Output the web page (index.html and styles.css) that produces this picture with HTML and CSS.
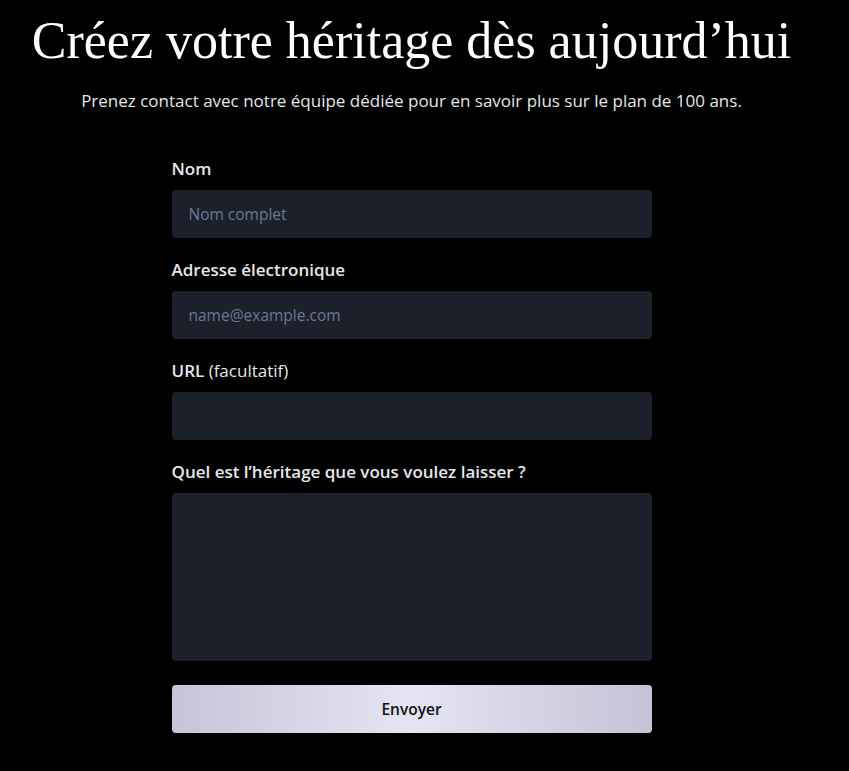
FILE: index.html
```html
<!DOCTYPE html>
<html lang="fr">
<head>
<meta charset="utf-8">
<title>Créez votre héritage</title>
<link rel="stylesheet" href="styles.css">
</head>
<body>
<main class="page">
  <h1 class="title">Créez votre héritage dès aujourd’hui</h1>
  <p class="lead">Prenez contact avec notre équipe dédiée pour en savoir plus sur le plan de 100 ans.</p>
  <form class="form">
    <div class="field">
      <label class="label" for="nom">Nom</label>
      <input class="input" id="nom" type="text" placeholder="Nom complet">
    </div>
    <div class="field">
      <label class="label" for="email">Adresse électronique</label>
      <input class="input" id="email" type="email" placeholder="name@example.com">
    </div>
    <div class="field">
      <label class="label" for="url">URL <span class="optional">(facultatif)</span></label>
      <input class="input" id="url" type="url">
    </div>
    <div class="field">
      <label class="label" for="legacy">Quel est l’héritage que vous voulez laisser ?</label>
      <textarea class="input textarea" id="legacy"></textarea>
    </div>
    <button class="submit" type="button">Envoyer</button>
  </form>
</main>
</body>
</html>
```
FILE: styles.css
```css
html, body {
  margin: 0;
  padding: 0;
  background: #000;
}
body {
  font-family: "Open Sans", "Noto Sans", sans-serif;
  color: #e5e7eb;
}
.page {
  width: 823px;
  display: flex;
  flex-direction: column;
  align-items: center;
}
.title {
  margin: 10px 0 0;
  font-family: "Liberation Serif", "DejaVu Serif", serif;
  font-weight: 400;
  font-size: 52px;
  line-height: 62px;
  color: #fff;
}
.lead {
  margin: 17px 0 0;
  font-size: 17px;
  line-height: 24px;
  color: #e5e7eb;
}
.form {
  width: 480px;
  margin-top: 44px;
  display: flex;
  flex-direction: column;
  gap: 20px;
}
.field {
  display: flex;
  flex-direction: column;
}
.label {
  font-size: 17px;
  line-height: 24px;
  font-weight: 600;
  color: #e5e7eb;
  margin-bottom: 9px;
}
.optional {
  font-weight: 400;
}
.input {
  box-sizing: border-box;
  height: 48px;
  width: 100%;
  border: none;
  border-radius: 4px;
  background: #1c202b;
  padding: 0 17px;
  font-family: inherit;
  font-size: 15.5px;
  color: #e5e7eb;
  outline: none;
}
.input::placeholder {
  color: #6b7896;
}
.textarea {
  height: 168px;
  resize: none;
  padding: 12px 17px;
}
.submit {
  margin-top: 4px;
  height: 48px;
  border: none;
  border-radius: 4px;
  background: linear-gradient(90deg, #c6c4d7 0%, #e5e4f2 50%, #c4c2d5 100%);
  font-family: inherit;
  font-size: 15.5px;
  font-weight: 600;
  color: #111;
}
```
